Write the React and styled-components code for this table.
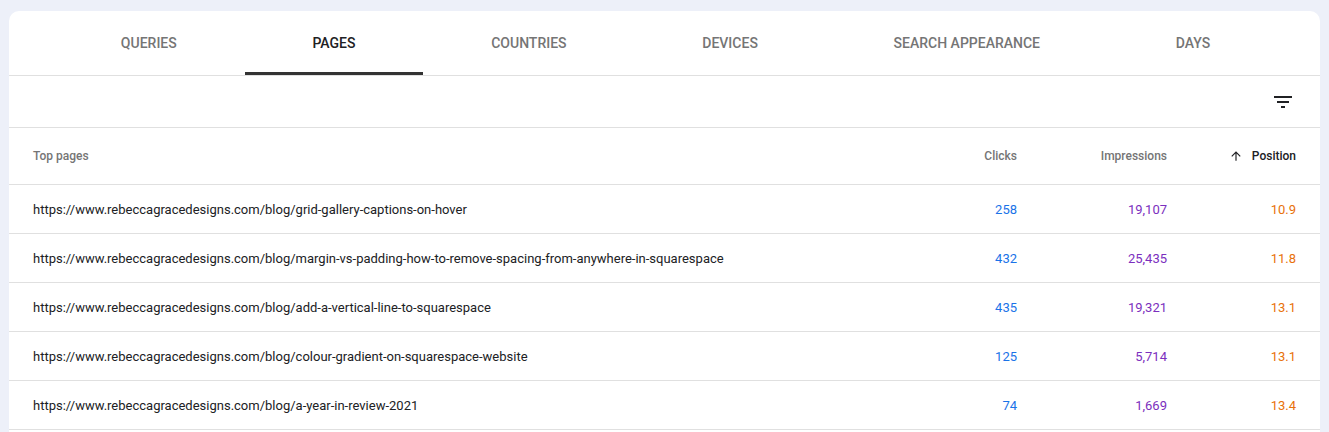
import React from "react";
import styled, { createGlobalStyle } from "styled-components";

const Global = createGlobalStyle`
  html, body { margin: 0; padding: 0; background: #edf0f9; }
  body { font-family: Roboto, "Noto Sans", Arial, sans-serif; -webkit-font-smoothing: antialiased; }
`;

const Page = styled.div`
  padding: 11px 9px 0 9px;
  height: 432px;
  box-sizing: border-box;
  overflow: hidden;
`;

const Card = styled.div`
  background: #fff;
  border-radius: 10px 10px 0 0;
  min-height: 440px;
`;

const Tabs = styled.div`
  display: flex;
  padding: 0 42px 0 44px;
  height: 64px;
  border-bottom: 1px solid #e0e0e0;
`;

const Tab = styled.div`
  flex: 1 1 auto;
  display: flex;
  align-items: center;
  justify-content: center;
  font-size: 14px;
  font-weight: 500;
  text-transform: uppercase;
  color: ${(p) => (p.$active ? "#202124" : "#757575")};
  border-bottom: 3px solid ${(p) => (p.$active ? "#333" : "transparent")};
  box-sizing: border-box;
  padding-top: 3px;
  padding-left: 12px;
  padding-right: 12px;
  white-space: nowrap;
`;

const Toolbar = styled.div`
  height: 51px;
  border-bottom: 1px solid #e0e0e0;
  display: flex;
  align-items: center;
  justify-content: flex-end;
  padding-right: 25px;
`;

const IconBtn = styled.div`
  width: 24px;
  height: 24px;
  display: flex;
  color: #202124;
`;

const Row = styled.div`
  display: grid;
  grid-template-columns: 1fr 150px 150px 129px;
  align-items: center;
  padding: 0 24px;
  height: ${(p) => (p.$head ? "56px" : "48px")};
  border-bottom: 1px solid #e0e0e0;
`;

const HeadCell = styled.div`
  font-size: 12px;
  font-weight: 500;
  color: ${(p) => (p.$active ? "#202124" : "#757575")};
  text-align: ${(p) => (p.$left ? "left" : "right")};
  display: flex;
  align-items: center;
  justify-content: ${(p) => (p.$left ? "flex-start" : "flex-end")};
  gap: 9px;
`;

const UrlCell = styled.div`
  font-size: 13px;
  color: #202124;
  white-space: nowrap;
`;

const Num = styled.div`
  font-size: 13px;
  text-align: right;
  color: ${(p) => p.$color};
`;

const tabs = ["Queries", "Pages", "Countries", "Devices", "Search appearance", "Days"];

const rows = [
  ["https://www.rebeccagracedesigns.com/blog/grid-gallery-captions-on-hover", "258", "19,107", "10.9"],
  ["https://www.rebeccagracedesigns.com/blog/margin-vs-padding-how-to-remove-spacing-from-anywhere-in-squarespace", "432", "25,435", "11.8"],
  ["https://www.rebeccagracedesigns.com/blog/add-a-vertical-line-to-squarespace", "435", "19,321", "13.1"],
  ["https://www.rebeccagracedesigns.com/blog/colour-gradient-on-squarespace-website", "125", "5,714", "13.1"],
  ["https://www.rebeccagracedesigns.com/blog/a-year-in-review-2021", "74", "1,669", "13.4"],
];

export default function App() {
  return (
    <>
      <Global />
      <Page>
        <Card>
          <Tabs>
            {tabs.map((t) => (
              <Tab key={t} $active={t === "Pages"}>{t}</Tab>
            ))}
          </Tabs>
          <Toolbar>
            <IconBtn>
              <svg width="24" height="24" viewBox="0 0 24 24" fill="currentColor">
                <path d="M10 18h4v-2h-4v2zM3 6v2h18V6H3zm3 7h12v-2H6v2z" />
              </svg>
            </IconBtn>
          </Toolbar>
          <Row $head>
            <HeadCell $left>Top pages</HeadCell>
            <HeadCell>Clicks</HeadCell>
            <HeadCell>Impressions</HeadCell>
            <HeadCell $active>
              <svg width="14" height="14" viewBox="0 0 24 24" fill="currentColor">
                <path d="M4 12l1.41 1.41L11 7.83V20h2V7.83l5.58 5.59L20 12l-8-8-8 8z" />
              </svg>
              Position
            </HeadCell>
          </Row>
          {rows.map((r) => (
            <Row key={r[0]}>
              <UrlCell>{r[0]}</UrlCell>
              <Num $color="#1a73e8">{r[1]}</Num>
              <Num $color="#7b2fbe">{r[2]}</Num>
              <Num $color="#e8710a">{r[3]}</Num>
            </Row>
          ))}
        </Card>
      </Page>
    </>
  );
}
